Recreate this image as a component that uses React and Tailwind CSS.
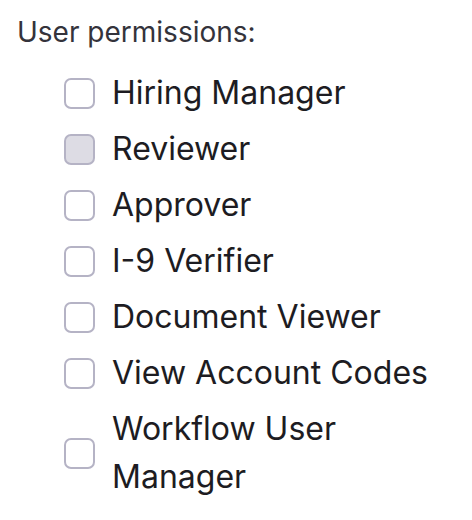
import React from "react";

const items = [
  { label: "Hiring Manager" },
  { label: "Reviewer", disabled: true },
  { label: "Approver" },
  { label: "I-9 Verifier" },
  { label: "Document Viewer" },
  { label: "View Account Codes" },
  { label: "Workflow User Manager" },
];

export default function App() {
  return (
    <div className="w-[472px] h-[520px] bg-white pl-[17px] pt-[14px] text-[#1d1c22]" style={{ fontFamily: "Inter, 'Noto Sans', sans-serif" }}>
      <div className="text-[28px] leading-[36px] text-[#34333b]">User permissions:</div>
      <div className="mt-[19px] ml-[47px] flex flex-col gap-[8px]">
        {items.map((it) => (
          <label key={it.label} className="flex items-center gap-[17px]">
            <span
              className={
                "shrink-0 w-[31px] h-[31px] rounded-[7px] border-2 border-[#b5b3c5] " +
                (it.disabled ? "bg-[#dddce4]" : "bg-white")
              }
            />
            <span className="text-[32px] leading-[48px] max-w-[320px]">{it.label}</span>
          </label>
        ))}
      </div>
    </div>
  );
}
